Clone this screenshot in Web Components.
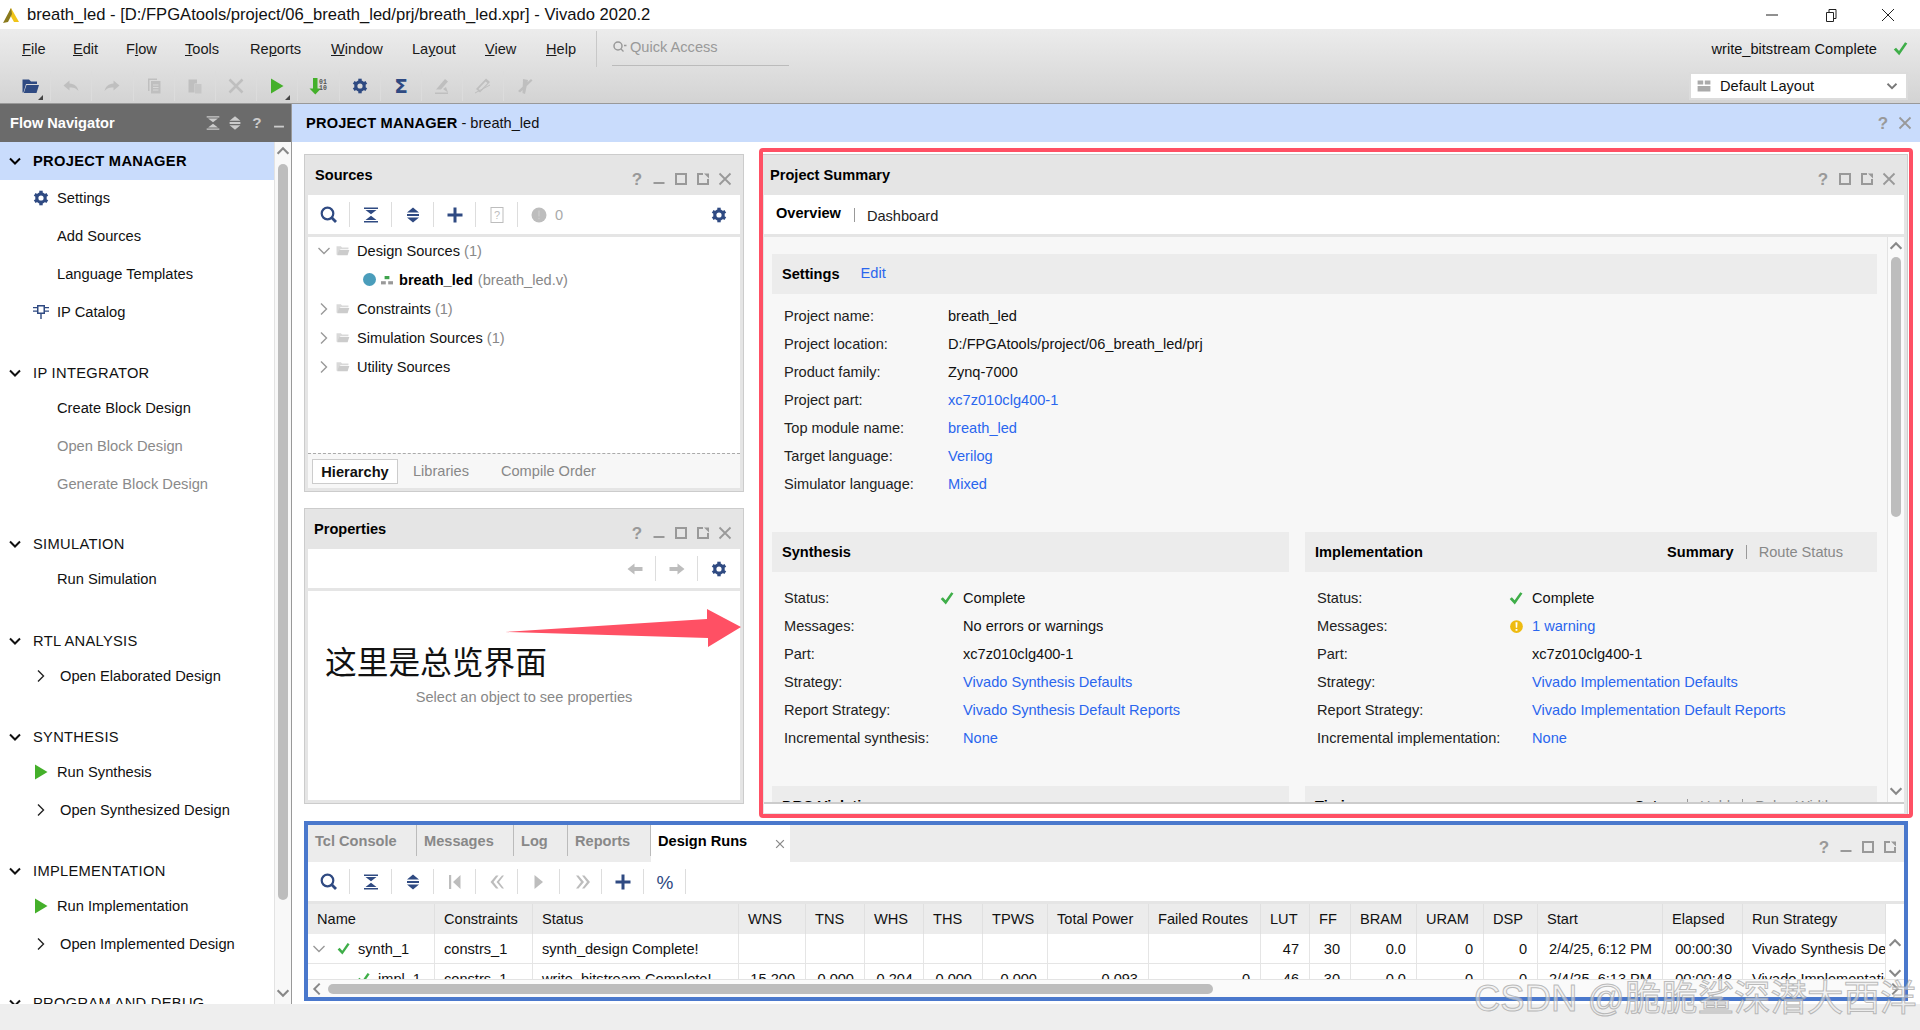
<!DOCTYPE html>
<html lang="en">
<head>
<meta charset="utf-8">
<title>breath_led - Vivado 2020.2</title>
<style>
    html, body { margin: 0; height: 100%; }
    body {
        position: relative;
        width: 1920px;
        height: 1030px;
        overflow: hidden;
        display: flex;
        flex-direction: column;
        background: #fff;
        color: #111;
        font: 14.6px "Liberation Sans", Arial, sans-serif;
    }
</style>
</head>
<body>
    <title-bar>breath_led - [D:/FPGAtools/project/06_breath_led/prj/breath_led.xpr] - Vivado 2020.2</title-bar>
    <menu-area></menu-area>

    <main-area>
        <flow-navigator slot="nav">
            <nav-section label="PROJECT MANAGER" active>
                <nav-item icon="gear">Settings</nav-item>
                <nav-item>Add Sources</nav-item>
                <nav-item>Language Templates</nav-item>
                <nav-item icon="ip">IP Catalog</nav-item>
            </nav-section>
            <nav-section label="IP INTEGRATOR">
                <nav-item>Create Block Design</nav-item>
                <nav-item grey>Open Block Design</nav-item>
                <nav-item grey>Generate Block Design</nav-item>
            </nav-section>
            <nav-section label="SIMULATION" style="--gap:25px">
                <nav-item>Run Simulation</nav-item>
            </nav-section>
            <nav-section label="RTL ANALYSIS" style="--gap:27px">
                <nav-item icon="chevron">Open Elaborated Design</nav-item>
            </nav-section>
            <nav-section label="SYNTHESIS">
                <nav-item icon="play">Run Synthesis</nav-item>
                <nav-item icon="chevron">Open Synthesized Design</nav-item>
            </nav-section>
            <nav-section label="IMPLEMENTATION">
                <nav-item icon="play">Run Implementation</nav-item>
                <nav-item icon="chevron">Open Implemented Design</nav-item>
            </nav-section>
            <nav-section label="PROGRAM AND DEBUG" style="--gap:24px"></nav-section>
        </flow-navigator>

        <context-band slot="band"></context-band>

        <work-space slot="work">
            <ide-panel slot="left" heading="Sources" controls="?_mpx" style="height:338px">
                <tool-bar slot="toolbar">
                    <tool-btn name="search" sep></tool-btn>
                    <tool-btn name="collapse" sep></tool-btn>
                    <tool-btn name="expand" sep></tool-btn>
                    <tool-btn name="plus" sep></tool-btn>
                    <tool-btn name="docq" sep grey></tool-btn>
                    <tool-btn name="dot" grey></tool-btn>
                    <span style="color:#aaa;margin-left:-5px">0</span>
                    <tool-btn name="gear" style="margin-left:auto"></tool-btn>
                </tool-bar>
                <sources-view></sources-view>
            </ide-panel>

            <ide-panel slot="left" heading="Properties" controls="?_mpx" style="height:296px;--title-pad:6px">
                <tool-bar slot="toolbar" style="justify-content:flex-end">
                    <tool-btn name="left" sep grey></tool-btn>
                    <tool-btn name="right" sep grey></tool-btn>
                    <tool-btn name="gear"></tool-btn>
                </tool-bar>
                <properties-view></properties-view>
            </ide-panel>

            <ide-panel slot="right" heading="Project Summary" controls="?mpx" style="height:663px;--title-pad:6px">
                <summary-tabs slot="toolbar"></summary-tabs>
                <summary-view>
                    <section-head heading="Settings"><span slot="after" style="color:#2a66ee">Edit</span></section-head>
                    <div style="padding:8px 0 34px;--label-w:164px">
                        <kv-row label="Project name:" value="breath_led"></kv-row>
                        <kv-row label="Project location:" value="D:/FPGAtools/project/06_breath_led/prj"></kv-row>
                        <kv-row label="Product family:" value="Zynq-7000"></kv-row>
                        <kv-row label="Project part:" value="xc7z010clg400-1" link></kv-row>
                        <kv-row label="Top module name:" value="breath_led" link></kv-row>
                        <kv-row label="Target language:" value="Verilog" link></kv-row>
                        <kv-row label="Simulator language:" value="Mixed" link></kv-row>
                    </div>
                    <two-cols>
                        <div slot="a" style="--label-w:163px;--icon-w:16px">
                            <section-head heading="Synthesis"></section-head>
                            <div style="padding:12px 0 34px">
                                <kv-row label="Status:" value="Complete" icon="check"></kv-row>
                                <kv-row label="Messages:" value="No errors or warnings"></kv-row>
                                <kv-row label="Part:" value="xc7z010clg400-1"></kv-row>
                                <kv-row label="Strategy:" value="Vivado Synthesis Defaults" link></kv-row>
                                <kv-row label="Report Strategy:" value="Vivado Synthesis Default Reports" link></kv-row>
                                <kv-row label="Incremental synthesis:" value="None" link></kv-row>
                            </div>
                            <section-head heading="DRC Violations"></section-head>
                        </div>
                        <div slot="b" style="--label-w:199px;--icon-w:16px">
                            <section-head heading="Implementation">
                                <head-tabs slot="right" style="margin-right:34px" items="Summary|Route Status"></head-tabs>
                            </section-head>
                            <div style="padding:12px 0 34px">
                                <kv-row label="Status:" value="Complete" icon="check"></kv-row>
                                <kv-row label="Messages:" value="1 warning" icon="warn" link></kv-row>
                                <kv-row label="Part:" value="xc7z010clg400-1"></kv-row>
                                <kv-row label="Strategy:" value="Vivado Implementation Defaults" link></kv-row>
                                <kv-row label="Report Strategy:" value="Vivado Implementation Default Reports" link></kv-row>
                                <kv-row label="Incremental implementation:" value="None" link></kv-row>
                            </div>
                            <section-head heading="Timing">
                                <head-tabs slot="right" style="margin-right:44px" items="Setup|Hold|Pulse Width"></head-tabs>
                            </section-head>
                        </div>
                    </two-cols>
                </summary-view>
            </ide-panel>

            <ide-panel slot="bottom" controls="?_mp" style="height:180px;--pad-top:3px;--head-h:37px;--head-bg:#ececec;--ctl-pad:3px;--ctl-top:7px">
                <console-tabs slot="heading"></console-tabs>
                <tool-bar slot="toolbar">
                    <tool-btn name="search" sep></tool-btn>
                    <tool-btn name="collapse" sep></tool-btn>
                    <tool-btn name="expand" sep></tool-btn>
                    <tool-btn name="first" sep grey></tool-btn>
                    <tool-btn name="prev" sep grey></tool-btn>
                    <tool-btn name="next" sep grey></tool-btn>
                    <tool-btn name="last" sep grey></tool-btn>
                    <tool-btn name="plus" sep></tool-btn>
                    <tool-btn name="percent" sep></tool-btn>
                </tool-bar>
                <runs-table></runs-table>
            </ide-panel>
        </work-space>
    </main-area>

    <status-bar></status-bar>

    <!-- annotations someone drew over the screenshot -->
    <annot-box style="left:759px;top:148px;width:1154px;height:670px;--c:#ff5064;--r:4px"></annot-box>
    <annot-box style="left:304px;top:821px;width:1604px;height:180px;--c:#4a78cc;--r:0"></annot-box>
    <annot-arrow></annot-arrow>
    <annot-note>这里是总览界面</annot-note>
    <water-mark>CSDN @脆脆鲨深潜大西洋</water-mark>

<script>
// All the little svg icons, drawn in a 20x20 box and coloured with currentColor
const ICONS = {
    search: '<circle cx="8.5" cy="8.5" r="5.8" fill="none" stroke="currentColor" stroke-width="2.2"/><path d="M12.8 12.8l4.2 4.2" stroke="currentColor" stroke-width="2.8"/>',
    collapse: '<path d="M3 2.5h14V4H3zM4.5 5h11L10 9.3zM10 10.7l5.5 4.3h-11zM3 16h14v1.5H3z"/>',
    expand: '<path d="M10 2.5l6 5H4zM4 9h12v2H4zM4 12.5h12l-6 5z"/>',
    plus: '<path d="M8.5 2.5h3v6h6v3h-6v6h-3v-6h-6v-3h6z"/>',
    docq: '<rect x="4" y="2.5" width="12" height="15" fill="none" stroke="currentColor"/><text x="10" y="14" font-size="11" text-anchor="middle" font-family="Liberation Sans">?</text>',
    dot: '<circle cx="10" cy="10" r="7.5"/><path d="M9.3 5.5h1.4v6H9.3zM9.3 12.8h1.4v1.5H9.3z" fill="#ccc"/>',
    gear: '<circle cx="10" cy="10" r="4.2" fill="none" stroke="currentColor" stroke-width="3.2"/><rect x="8.3" y="2.7" width="3.4" height="3"/><rect x="8.3" y="2.7" width="3.4" height="3" transform="rotate(60 10 10)"/><rect x="8.3" y="2.7" width="3.4" height="3" transform="rotate(120 10 10)"/><rect x="8.3" y="2.7" width="3.4" height="3" transform="rotate(180 10 10)"/><rect x="8.3" y="2.7" width="3.4" height="3" transform="rotate(240 10 10)"/><rect x="8.3" y="2.7" width="3.4" height="3" transform="rotate(300 10 10)"/>',
    left: '<path d="M2.5 10l7-5.5V8h8v4h-8v3.5z"/>',
    right: '<path d="M17.5 10l-7-5.5V8h-8v4h8v3.5z"/>',
    first: '<path d="M4 3h2.2v14H4zM15.5 3v14L8 10z"/>',
    prev: '<path d="M9 3.5L3.5 10 9 16.5h2.5L6.5 10l5-6.5zM15 3.5L9.5 10l5.500 6.500H17L12 10l5-6.500z"/>',
    next: '<path d="M5.500 3l8.500 7-8.500 7z"/>',
    last: '<path d="M5 3.500L10 10l-5 6.500h2.500L13 10 7.500 3.500zM11 3.500L16 10l-5 6.500h2.500L19 10l-5.500-6.500z"/>',
    percent: '<text x="10" y="16.500" font-size="19" text-anchor="middle" font-family="Liberation Sans">%</text>',
    check: '<path d="M2 10.500l2.500-2 3.300 3.700L14.500 2.500 17 4 8 17z"/>',
    warn: '<circle cx="10" cy="10" r="7.500" fill="#eebb11"/><path d="M8.800 5h2.400l-.4 6.500H9.200zM8.900 12.800h2.200V15H8.900z" fill="#fff"/>',
    chevron: '<path d="M7 4.500l5.500 5.500-5.500 5.500" fill="none" stroke="currentColor" stroke-width="1.400"/>',
    down: '<path d="M4.500 7l5.500 5.500 5.500-5.500" fill="none" stroke="currentColor" stroke-width="1.400"/>',
    navdown: '<path d="M5 7.500l5 5 5-5" fill="none" stroke="currentColor" stroke-width="2"/>',
    up: '<path d="M4 13l6-6 6 6" fill="none" stroke="currentColor" stroke-width="2.400"/>',
    bigdown: '<path d="M4 7l6 6 6-6" fill="none" stroke="currentColor" stroke-width="2.400"/>',
    lchev: '<path d="M13 4l-6 6 6 6" fill="none" stroke="currentColor" stroke-width="2.200"/>',
    rchev: '<path d="M7 4l6 6-6 6" fill="none" stroke="currentColor" stroke-width="2.200"/>',
    play: '<path d="M4 2.500l12.500 7.500L4 17.500z"/>',
    ip: '<path d="M6 3h8v9H6zM7.500 4.500v6h5v-6zM9.300 12h1.400v5H9.300zM2 5h4v1.300H2zM2 8.500h4v1.300H2zM14 5h4v1.300h-4zM14 8.500h4v1.300h-4z"/>',
    folder: '<path d="M3 5h5l1.500 1.500H17v2H7.500L5.500 15H3z" opacity=".75"/><path d="M6 9.500h12L16 15.500H3.800z"/>',
    hier: '<rect x="7" y="5" width="6" height="4" fill="#3fa34d"/><rect x="2.500" y="11.500" width="6" height="4" fill="#999"/><rect x="11.500" y="11.500" width="6" height="4" fill="#999"/>',
    openfolder: '<path d="M2.500 3.500h6.500l2 2H17V8H6L3.500 16.500h-1z"/><path d="M6.500 9h12.500L16.500 17H3.800z"/>',
    undo: '<path d="M8.500 4.500L2.500 9.500 8.500 14.500V11.500C12 11 15 12 17.500 15 16.500 10.500 13.500 7.800 8.500 7.500z"/>',
    redo: '<path d="M11.500 4.500L17.500 9.500 11.500 14.500V11.500C8 11 5 12 2.500 15 3.500 10.500 6.500 7.800 11.500 7.500z"/>',
    copy: '<path d="M4 2.500h9V4H5.500v11H4z"/><path d="M7 5h9.500v12.500H7zM9 8.500v1h5.500v-1zM9 11v1h5.500v-1zM9 13.500v1h5.500v-1z"/>',
    paste: '<path d="M3.500 3.500H12v4H9.500V16.500H3.500z"/><path d="M10 8h6.500v9.500H10z" opacity=".7"/>',
    cross: '<path d="M3.500 3.500l13 13M16.500 3.500l-13 13" fill="none" stroke="currentColor" stroke-width="2.500"/>',
    prog: '<path d="M5 2h4.500v10.500H13L7.300 18.500 1.500 12.500H5z" fill="#44b02a"/><text x="11" y="7.500" font-size="6.500" font-family="Liberation Mono" font-weight="700" fill="#555">01</text><text x="11" y="13.500" font-size="6.500" font-family="Liberation Mono" font-weight="700" fill="#555">10</text>',
    sigma: '<text x="10" y="17" font-size="20" font-weight="700" text-anchor="middle" font-family="DejaVu Sans">Σ</text>',
    tool1: '<path d="M3 16.500h13V18H3zM4 13.500L13 3l3 2.500-7 8zM11 13l3-2 2 5.500z"/>',
    tool2: '<path d="M3 13L13 2.500l4 3.500L7 16.500zM5.500 13l2 1.500 7-7.500-2-1.500z"/><path d="M2 17L17 9" stroke="currentColor"/>',
    tool3: '<path d="M8 3l5 1-3 14-2.500-1zM3 15L16 3l1.500 1.500L5 16.500z"/>',
    min: '<rect x="4.500" y="13" width="11" height="2"/>',
    max: '<rect x="5" y="5" width="10" height="10" fill="none" stroke="currentColor" stroke-width="2"/>',
    pop: '<path d="M10 5H5v10h10v-5" fill="none" stroke="currentColor" stroke-width="2"/><path d="M11 4.500h5v5z"/>',
    x: '<path d="M4.500 4.500l11 11M15.500 4.500l-11 11" fill="none" stroke="currentColor" stroke-width="1.800"/>',
    q: '<text x="10" y="16" font-size="17" font-weight="700" text-anchor="middle" font-family="Liberation Sans">?</text>',
    layout: '<path d="M2 3h7v5H2zM11 3h7v5h-7zM2 10h16v7H2z"/>'
};

// Inline svg of one icon
function svgIcon(name, size = 20) {
    return `<svg xmlns="http://www.w3.org/2000/svg" width="${size}" height="${size}" viewBox="0 0 20 20" fill="currentColor" style="display:block;flex:none">${ICONS[name]}</svg>`;
}

// Base class so every element below only has to say what goes in its shadow root
class ShadowPart extends HTMLElement {
    constructor() {
        super();
        this.attachShadow({ mode: "open" });
    }

    connectedCallback() {
        this.shadowRoot.innerHTML = this.template();
    }
}

class TitleBar extends ShadowPart {
    template() {
        return `
        <style>
            :host { display: flex; align-items: center; height: 29px; flex: none; background: #fff; font-size: 16.600px; white-space: nowrap; }
            .logo { margin: 0 7px 0 2px; flex: none; }
            .text { flex: 1; }
            .ctl { display: flex; justify-content: center; color: #222; }
        </style>
        <svg class="logo" width="18" height="20" viewBox="0 0 18 20"><path d="M9 3l8 14h-5L7 8z" fill="#f0c419"/><path d="M9 3L1 18l5-1 4-8z" fill="#8a7a1d"/></svg>
        <div class="text"><slot></slot></div>
        <div class="ctl" style="width:58px"><svg width="14" height="14"><path d="M1 7h12" stroke="currentColor"/></svg></div>
        <div class="ctl" style="width:59px"><svg width="14" height="14"><path d="M2.500 4.500h7v9h-7zM5 4.500V1.500h7v9h-2.500" fill="none" stroke="currentColor"/></svg></div>
        <div class="ctl" style="width:56px;margin-right:4px"><svg width="14" height="14"><path d="M1 1l12 12M13 1L1 13" stroke="currentColor"/></svg></div>`;
    }
}

class MenuArea extends ShadowPart {
    template() {
        const lefts = [22, 73, 126, 185, 250, 331, 412, 485, 546, 596];
        const menuHtml = ["<u>F</u>ile", "<u>E</u>dit", "F<u>l</u>ow", "<u>T</u>ools", "Re<u>p</u>orts", "<u>W</u>indow", "La<u>y</u>out", "<u>V</u>iew", "<u>H</u>elp"]
            .map((m, i) => `<span style="width:${lefts[i + 1] - lefts[i]}px">${m}</span>`).join("");
        const tools = [["openfolder", "#2f4a82", 1], ["undo"], ["redo"], ["copy"], ["paste"], ["cross"], ["play", "#44b02a", 1],
            ["prog", "#44b02a"], ["gear", "#2f4a82"], ["sigma", "#2f4a82"], ["tool1"], ["tool2"], ["tool3"]];
        const toolHtml = tools.map(([n, c, more]) =>
            `<div class="cell" style="color:${c || "#bfbfbf"}">${svgIcon(n)}${more ? '<i class="more"></i>' : ""}</div>`).join("");
        return `
        <style>
            :host { display: block; flex: none; height: 75px; box-sizing: border-box; border-bottom: 1px solid #999;
                background: linear-gradient(#ececec, #d3d3d3); }
            .row { display: flex; align-items: center; padding-right: 12px; }
            .menus { height: 40px; }
            .tools { height: 34px; padding-left: 10px; }
            .items { display: flex; margin-left: 22px; color: #1a1a1a; white-space: nowrap; }
            .items span { flex: none; }
            .bar { width: 1px; height: 36px; background: #c8c8c8; }
            .quick { margin-left: 15px; width: 177px; height: 34px; box-sizing: border-box; border-bottom: 1px solid #bbb;
                display: flex; align-items: center; gap: 3px; color: #999; padding-bottom: 4px; }
            .status { margin-left: auto; margin-right: -2px; display: flex; align-items: center; gap: 15px; }
            .status svg { color: #3fae49; }
            .cell { position: relative; width: 41.200px; height: 30px; display: flex; align-items: center; justify-content: center;
                box-sizing: border-box; border-right: 1px solid #dcdcdc; }
            .cell:nth-child(13) { border: 0; }
            .more { position: absolute; right: 7px; bottom: 1px; border-left: 5px solid transparent; border-bottom: 5px solid #444; }
            .combo { margin-left: auto; width: 219px; height: 28px; box-sizing: border-box; border: 2px solid #dcdcdc; background: #fff;
                display: flex; align-items: center; padding: 0 5px; color: #111; }
            .combo .lay { color: #aaa; margin-right: 8px; }
            .combo .arrow { margin-left: auto; color: #777; }
        </style>
        <div class="row menus">
            <div class="items">${menuHtml}</div>
            <div class="bar"></div>
            <div class="quick"><svg width="15" height="15" viewBox="0 0 15 15"><circle cx="6" cy="7" r="4" fill="none" stroke="#999" stroke-width="1.500"/><path d="M9 10l2.500 2.500M12 6.500h2.500" stroke="#999" stroke-width="1.300"/></svg>Quick Access</div>
            <div class="status">write_bitstream Complete ${svgIcon("check", 18)}</div>
        </div>
        <div class="row tools">
            ${toolHtml}
            <div class="combo"><span class="lay">${svgIcon("layout", 16)}</span>Default Layout<span class="arrow">${svgIcon("navdown", 18)}</span></div>
        </div>`;
    }
}

// Lays out the navigator on the left and the band + workspace on the right
class MainArea extends ShadowPart {
    template() {
        return `
        <style>
            :host { display: grid; flex: none; height: 900px; grid-template-columns: 292px 1fr; grid-template-rows: 38px 1fr; }
            ::slotted([slot="nav"]) { grid-row: 1 / 3; }
        </style>
        <slot name="nav"></slot>
        <slot name="band"></slot>
        <slot name="work"></slot>`;
    }
}

class FlowNavigator extends ShadowPart {
    template() {
        return `
        <style>
            :host { display: flex; flex-direction: column; min-height: 0; border-right: 1px solid #999; box-sizing: border-box; }
            .head { height: 38px; flex: none; background: #6b6b6b; color: #fff; font-weight: 700; display: flex; align-items: center; padding-left: 10px; }
            .icons { margin-left: auto; display: flex; color: #ccc; padding-right: 1px; }
            .icons div { width: 22px; display: flex; justify-content: center; }
            .body { flex: 1; display: flex; min-height: 0; }
            .list { flex: 1; overflow: hidden; font-size: 14.700px; }
        </style>
        <div class="head">Flow Navigator
            <div class="icons">
                <div>${svgIcon("collapse", 18)}</div><div>${svgIcon("expand", 18)}</div><div>${svgIcon("q", 18)}</div><div>${svgIcon("min", 18)}</div>
            </div>
        </div>
        <div class="body">
            <div class="list"><slot></slot></div>
            <scroll-bar before="2" size="736" style="width:17px"></scroll-bar>
        </div>`;
    }
}

class NavSection extends ShadowPart {
    template() {
        const active = this.hasAttribute("active");
        return `
        <style>
            :host { display: block; margin-top: ${active ? "0" : "var(--gap, 26px)"}; }
            .label { display: flex; align-items: center; height: ${active ? 38 : 32}px; white-space: nowrap; color: #111;
                ${active ? "background:#c9dcfc;font-weight:700;color:#000;margin-bottom:-1px;" : ""} }
            .chev { width: 20px; margin: 0 8px 0 5px; }
            .label span { letter-spacing: .3px; }
        </style>
        <div class="label"><div class="chev">${svgIcon("navdown")}</div><span>${this.getAttribute("label")}</span></div>
        <slot></slot>`;
    }
}

class NavItem extends ShadowPart {
    template() {
        const icon = this.getAttribute("icon");
        const colors = { gear: "#2f4a82", ip: "#2f4a82", play: "#44b02a", chevron: "#222" };
        const chevron = icon === "chevron";
        return `
        <style>
            :host { display: flex; align-items: center; height: 38px; padding-left: 31px; white-space: nowrap;
                color: ${this.hasAttribute("grey") ? "#8a8a8a" : "#111"}; }
            .icon { width: ${chevron ? 29 : 26}px; color: ${colors[icon] || "inherit"}; }
        </style>
        <div class="icon">${icon ? svgIcon(icon) : ""}</div><slot></slot>`;
    }
}

// Vertical or horizontal scrollbar with its two arrows
class ScrollBar extends ShadowPart {
    template() {
        const before = this.getAttribute("before") || 0;
        const size = this.getAttribute("size");
        const across = this.hasAttribute("across");
        const a = across ? "lchev" : "up";
        const b = across ? "rchev" : "bigdown";
        return `
        <style>
            :host { display: flex; flex: none; flex-direction: ${across ? "row" : "column"}; align-items: center; box-sizing: border-box;
                background: #f8f8f8; ${across ? "border-top: 1px solid #e3e3e3;" : "border-left: 1px solid #e3e3e3;"} color: #888; }
            .arrow { flex: none; ${across ? "width:18px;" : "height:20px;"} display: flex; justify-content: center; }
            .thumb { flex: none; background: #bdbdbd; border-radius: 5px; margin-${across ? "left" : "top"}: ${before}px;
                ${across ? `width:${size}px;height:10px;` : `height:${size}px;width:10px;`} }
            .fill { flex: 1; }
        </style>
        <div class="arrow">${svgIcon(a, 18)}</div><div class="thumb"></div><div class="fill"></div><div class="arrow">${svgIcon(b, 18)}</div>`;
    }
}

class ContextBand extends ShadowPart {
    template() {
        return `
        <style>
            :host { display: flex; align-items: center; background: #c9dcfc; padding-left: 14px; color: #111; }
            b { color: #000; letter-spacing: .2px; }
            .icons { margin-left: auto; display: flex; color: #999; padding-right: 4px; }
            .icons div { width: 22px; display: flex; justify-content: center; }
        </style>
        <span><b>PROJECT MANAGER</b> - breath_led</span>
        <div class="icons"><div>${svgIcon("q")}</div><div>${svgIcon("x")}</div></div>`;
    }
}

class WorkSpace extends ShadowPart {
    template() {
        return `
        <style>
            :host { display: grid; min-height: 0; padding: 12px 12px 0; grid-template-columns: 440px 1148px; column-gap: 16px;
                grid-template-rows: 663px 180px; row-gap: 4px; background: #fff; }
            .left { display: flex; flex-direction: column; gap: 16px; }
            .bottom { grid-column: 1 / 3; }
        </style>
        <div class="left"><slot name="left"></slot></div>
        <slot name="right"></slot>
        <div class="bottom"><slot name="bottom"></slot></div>`;
    }
}

// Dockable window: header with its controls, a toolbar strip and a body
class IdePanel extends ShadowPart {
    template() {
        const map = { "?": "q", _: "min", m: "max", p: "pop", x: "x" };
        const controls = [...(this.getAttribute("controls") || "")].map(c => `<div>${svgIcon(map[c])}</div>`).join("");
        const heading = this.getAttribute("heading");
        return `
        <style>
            :host { display: flex; flex-direction: column; box-sizing: border-box; border: 1px solid #ccc; background: #e5e5e5;
                padding: var(--pad-top, 0) 3px 3px; min-height: 0; }
            .head { flex: none; height: var(--head-h, 40px); display: flex; background: var(--head-bg, #e5e5e5); }
            .title { display: flex; align-items: center; font-weight: 700; color: #000; padding-left: var(--title-pad, 7px); }
            ::slotted([slot="heading"]) { margin-left: -7px; }
            .ctl { margin-left: auto; display: flex; align-items: center; color: #999; padding: var(--ctl-top, 8px) var(--ctl-pad, 4px) 0 0; }
            .ctl div { width: 22px; display: flex; justify-content: center; }
            .toolbar { flex: none; height: 39px; background: #fff; margin-bottom: 3px; display: flex; }
            .toolbar ::slotted(*) { flex: 1; }
            .body { flex: 1; min-height: 0; display: flex; flex-direction: column; background: #fff; overflow: hidden; }
        </style>
        <div class="head">
            <div class="title">${heading || ""}<slot name="heading"></slot></div>
            <div class="ctl">${controls}</div>
        </div>
        <div class="toolbar"><slot name="toolbar"></slot></div>
        <div class="body"><slot></slot></div>`;
    }
}

class ToolBar extends ShadowPart {
    template() {
        return `
        <style>
            :host { display: flex; align-items: center; }
        </style>
        <slot></slot>`;
    }
}

class ToolBtn extends ShadowPart {
    template() {
        const grey = this.hasAttribute("grey");
        return `
        <style>
            :host { display: flex; flex: none; width: 42px; height: 25px; align-items: center; justify-content: center; box-sizing: border-box;
                color: ${grey ? "#bdbdbd" : "#2f4a82"}; ${this.hasAttribute("sep") ? "border-right: 1px solid #ddd;" : ""} }
        </style>
        ${svgIcon(this.getAttribute("name"))}`;
    }
}

class SourcesView extends ShadowPart {
    template() {
        const folder = `<span class="folder">${svgIcon("folder", 17)}</span>`;
        const row = (chev, text) => `<div class="row"><span class="chev">${svgIcon(chev)}</span>${folder}${text}</div>`;
        return `
        <style>
            :host { display: flex; flex-direction: column; flex: 1; min-height: 0; }
            .tree { flex: 1; margin-top: -1px; }
            .row { height: 29px; display: flex; align-items: center; padding-left: 6px; white-space: nowrap; color: #111; }
            .chev { width: 20px; color: #999; }
            .folder { width: 17px; margin-right: 6px; color: #ccc; }
            .row i { font-style: normal; color: #888; }
            .top { padding-left: 55px; }
            .dot { width: 13px; height: 13px; border-radius: 50%; background: #4a9dbb; margin-right: 3px; }
            .hier { width: 14px; margin-right: 6px; }
            .top b { color: #000; margin-right: 5px; }
            .tabs { flex: none; height: 35px; box-sizing: border-box; border-top: 1px dashed #aaa; background: #f7f7f7; display: flex; align-items: center; padding: 0 4px; color: #888; }
            .tabs b { box-sizing: border-box; height: 25px; width: 86px; margin-top: 1px; display: flex; align-items: center; justify-content: center; color: #111; background: #fff; border: 1px solid #ccc; margin-right: 15px; }
            .tabs span + span { margin-left: 32px; }
        </style>
        <div class="tree">
            ${row("down", "<span>Design Sources <i>(1)</i></span>")}
            <div class="row top"><span class="dot"></span><span class="hier">${svgIcon("hier", 16)}</span><b>breath_led</b><i>(breath_led.v)</i></div>
            ${row("chevron", "<span>Constraints <i>(1)</i></span>")}
            ${row("chevron", "<span>Simulation Sources <i>(1)</i></span>")}
            ${row("chevron", "<span>Utility Sources</span>")}
        </div>
        <div class="tabs"><b>Hierarchy</b><span>Libraries</span><span>Compile Order</span></div>`;
    }
}

class PropertiesView extends ShadowPart {
    template() {
        return `
        <style>
            :host { display: flex; flex: 1; align-items: center; justify-content: center; color: #888; padding-top: 3px; }
        </style>
        Select an object to see properties`;
    }
}

class SummaryTabs extends ShadowPart {
    template() {
        return `
        <style>
            :host { display: flex; align-items: center; padding-left: 12px; }
            b { color: #000; margin-top: -4px; }
            i { width: 1px; height: 14px; background: #999; margin: 0 12px 0 13px; }
            span { color: #222; margin-top: 2px; }
        </style>
        <b>Overview</b><i></i><span>Dashboard</span>`;
    }
}

// Scrolling part of the project summary
class SummaryView extends ShadowPart {
    template() {
        return `
        <style>
            :host { display: flex; flex-direction: column; flex: 1; min-height: 0; }
            .main { height: 567px; box-sizing: border-box; flex: none; display: flex; background: #f7f7f7; border-bottom: 2px solid #ccc; overflow: hidden; }
            .content { flex: 1; min-width: 0; padding: 17px 10px 0 8px; }
        </style>
        <div class="main">
            <div class="content"><slot></slot></div>
            <scroll-bar before="0" size="260" style="width:17px;background:#fafafa"></scroll-bar>
        </div>`;
    }
}

class TwoCols extends ShadowPart {
    template() {
        return `
        <style>
            :host { display: grid; grid-template-columns: 517px 572px; column-gap: 16px; }
        </style>
        <slot name="a"></slot><slot name="b"></slot>`;
    }
}

class SectionHead extends ShadowPart {
    template() {
        return `
        <style>
            :host { display: flex; align-items: center; height: 40px; background: #ececec; padding-left: 10px; }
            b { color: #000; }
            .after { margin-left: 21px; margin-top: -2px; }
            .right { margin-left: auto; }
        </style>
        <b>${this.getAttribute("heading")}</b>
        <div class="after"><slot name="after"></slot></div>
        <div class="right"><slot name="right"></slot></div>`;
    }
}

class HeadTabs extends ShadowPart {
    template() {
        const items = this.getAttribute("items").split("|");
        const html = items.map((t, i) => (i ? "<i></i><span>" + t + "</span>" : "<b>" + t + "</b>")).join("");
        return `
        <style>
            :host { display: flex; align-items: center; }
            b { color: #000; }
            span { color: #888; }
            i { width: 1px; height: 14px; background: #999; margin: 0 12px; }
        </style>
        ${html}`;
    }
}

class KvRow extends ShadowPart {
    template() {
        const icon = this.getAttribute("icon");
        const link = this.hasAttribute("link");
        return `
        <style>
            :host { display: flex; align-items: center; height: 28px; padding-left: 12px; white-space: nowrap; }
            .label { width: var(--label-w); color: #222; flex: none; }
            .icon { width: var(--icon-w, 0); flex: none; color: #3fae49; margin-left: -8px; margin-right: 8px; }
            .value { color: ${link ? "#2a66ee" : "#111"}; }
        </style>
        <div class="label">${this.getAttribute("label")}</div>
        <div class="icon">${icon ? svgIcon(icon, 17) : ""}</div>
        <div class="value">${this.getAttribute("value")}</div>`;
    }
}

class ConsoleTabs extends ShadowPart {
    template() {
        return `
        <style>
            :host { display: flex; height: 37px; font-weight: 700; color: #888; align-items: stretch; }
            .tab { display: flex; align-items: center; box-sizing: border-box; padding-left: 7px; height: 31px; border-right: 1px solid #bbb; }
            .on { height: 37px; border: 0; padding-bottom: 6px; background: #fff; color: #000; width: 139px; position: relative; }
            .on svg { position: absolute; right: 3px; top: 12px; color: #888; }
        </style>
        <div class="tab" style="width:109px">Tcl Console</div>
        <div class="tab" style="width:97px">Messages</div>
        <div class="tab" style="width:54px">Log</div>
        <div class="tab" style="width:83px">Reports</div>
        <div class="tab on">Design Runs ${svgIcon("x", 14)}</div>`;
    }
}

// The design runs table, one grid row per run
class RunsTable extends ShadowPart {
    template() {
        const widths = [127, 98, 206, 67, 59, 59, 59, 65, 101, 112, 49, 41, 66, 67, 54, 125, 80, 143];
        const heads = ["Name", "Constraints", "Status", "WNS", "TNS", "WHS", "THS", "TPWS", "Total Power", "Failed Routes", "LUT", "FF", "BRAM", "URAM", "DSP", "Start", "Elapsed", "Run Strategy"];
        const rows = [
            ["constrs_1", "synth_design Complete!", "", "", "", "", "", "", "", "47", "30", "0.0", "0", "0", "2/4/25, 6:12 PM", "00:00:30", "Vivado Synthesis Defaults"],
            ["constrs_1", "write_bitstream Complete!", "15.200", "0.000", "0.204", "0.000", "0.000", "0.093", "0", "46", "30", "0.0", "0", "0", "2/4/25, 6:13 PM", "00:00:48", "Vivado Implementation Defaults"]
        ];
        const names = [
            `<span class="c">${svgIcon("down")}</span><span class="k">${svgIcon("check", 16)}</span>synth_1`,
            `<span style="width:48px"></span><span class="k">${svgIcon("check", 16)}</span>impl_1`
        ];
        const leftCols = [0, 1, 16];
        const headHtml = heads.map(h => `<div class="th">${h}</div>`).join("");
        const rowHtml = rows.map((r, i) =>
            `<div class="td name">${names[i]}</div>` +
            r.map((v, j) => `<div class="td ${leftCols.includes(j) ? "" : "num"}">${v}</div>`).join("")).join("");
        return `
        <style>
            :host { display: flex; flex-direction: column; flex: 1; min-height: 0; white-space: nowrap; }
            .view { height: 75px; flex: none; display: flex; overflow: hidden; }
            .grid { display: grid; grid-template-columns: ${widths.map(w => w + "px").join(" ")}; grid-auto-rows: 30px; }
            .th { background: #ececec; display: flex; align-items: center; padding-left: 9px; border-right: 1px solid #e0e0e0; box-sizing: border-box; color: #111; }
            .td { display: flex; align-items: center; padding: 0 9px; border-right: 1px solid #e5e5e5; border-bottom: 1px solid #e5e5e5; box-sizing: border-box; overflow: hidden; color: #111; }
            .td.num { justify-content: flex-end; padding-right: 10px; }
            .name { padding: 0; }
            .c { margin-left: 1px; width: 27px; color: #999; }
            .k { color: #3fae49; width: 17px; margin-right: 5px; }
            .side { flex: 1; background: #fff; display: flex; flex-direction: column; align-items: center; color: #888; padding-top: 30px; gap: 12px; }
        </style>
        <div class="view">
            <div class="grid">${headHtml}${rowHtml}</div>
            <div class="side">${svgIcon("up", 18)}${svgIcon("bigdown", 18)}</div>
        </div>
        <scroll-bar across before="2" size="885" style="height:18px;background:#fafafa"></scroll-bar>`;
    }
}

class StatusBar extends ShadowPart {
    template() {
        return `<style>:host { display: block; flex: none; height: 26px; background: #eee; }</style>`;
    }
}

// Coloured frame drawn over the screenshot
class AnnotBox extends ShadowPart {
    template() {
        return `<style>:host { position: absolute; box-sizing: border-box; border: 4px solid var(--c); border-radius: var(--r); pointer-events: none; }</style>`;
    }
}

class AnnotArrow extends ShadowPart {
    template() {
        return `
        <style>:host { position: absolute; left: 500px; top: 605px; }</style>
        <svg width="250" height="50" style="display:block"><polygon points="5,27 207,14 207,4 241,22 208,42 208,33" fill="#ff5064"/></svg>`;
    }
}

class AnnotNote extends ShadowPart {
    template() {
        return `
        <style>:host { position: absolute; left: 325px; top: 637px; font: 31.700px/46px "Noto Sans CJK SC", sans-serif; color: #111; white-space: nowrap; }</style>
        <slot></slot>`;
    }
}

class WaterMark extends ShadowPart {
    template() {
        return `
        <style>
            :host { position: absolute; left: 1474px; top: 977px; font: 36.500px/44px "Liberation Sans", "Noto Sans CJK SC", sans-serif; white-space: nowrap;
                color: rgba(235,235,235,.55); -webkit-text-stroke: 1px rgba(160,160,160,.7); }
        </style>
        <slot></slot>`;
    }
}

customElements.define("title-bar", TitleBar);
customElements.define("menu-area", MenuArea);
customElements.define("main-area", MainArea);
customElements.define("flow-navigator", FlowNavigator);
customElements.define("nav-section", NavSection);
customElements.define("nav-item", NavItem);
customElements.define("scroll-bar", ScrollBar);
customElements.define("context-band", ContextBand);
customElements.define("work-space", WorkSpace);
customElements.define("ide-panel", IdePanel);
customElements.define("tool-bar", ToolBar);
customElements.define("tool-btn", ToolBtn);
customElements.define("sources-view", SourcesView);
customElements.define("properties-view", PropertiesView);
customElements.define("summary-tabs", SummaryTabs);
customElements.define("summary-view", SummaryView);
customElements.define("two-cols", TwoCols);
customElements.define("section-head", SectionHead);
customElements.define("head-tabs", HeadTabs);
customElements.define("kv-row", KvRow);
customElements.define("console-tabs", ConsoleTabs);
customElements.define("runs-table", RunsTable);
customElements.define("status-bar", StatusBar);
customElements.define("annot-box", AnnotBox);
customElements.define("annot-arrow", AnnotArrow);
customElements.define("annot-note", AnnotNote);
customElements.define("water-mark", WaterMark);
</script>
</body>
</html>
